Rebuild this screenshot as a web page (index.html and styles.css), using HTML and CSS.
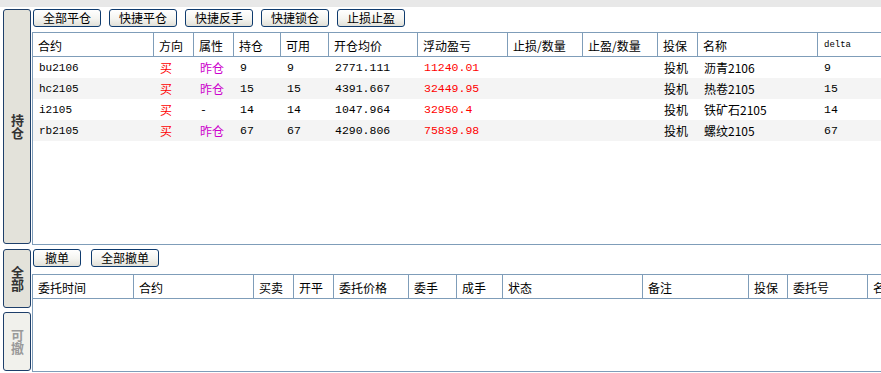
FILE: index.html
```html
<!DOCTYPE html>
<html lang="zh-CN">

<head>
    <meta charset="UTF-8">
    <meta name="viewport" content="width=device-width, initial-scale=1.0">
    <title>持仓</title>
    <link rel="stylesheet" href="styles.css">
</head>

<body>
    <div class="topbar"></div>
    <div class="main">
        <div class="tabs">
            <div class="tab tab-hold">持仓</div>
            <div class="tab tab-all">全部</div>
            <div class="tab tab-cancel">可撤</div>
        </div>

        <div class="content">
            <div class="toolbar toolbar-pos">
                <button>全部平仓</button>
                <button>快捷平仓</button>
                <button>快捷反手</button>
                <button>快捷锁仓</button>
                <button>止损止盈</button>
            </div>
            <div class="grid-box grid-box-pos">
                <table class="grid grid-pos">
                    <thead>
                        <tr>
                            <th style="width:121px">合约</th>
                            <th style="width:40px">方向</th>
                            <th style="width:40px">属性</th>
                            <th style="width:47px">持仓</th>
                            <th style="width:48px">可用</th>
                            <th style="width:89px">开仓均价</th>
                            <th style="width:90px">浮动盈亏</th>
                            <th style="width:75px">止损/数量</th>
                            <th style="width:75px">止盈/数量</th>
                            <th style="width:40px">投保</th>
                            <th style="width:120px">名称</th>
                            <th style="width:120px" class="th-mono">delta</th>
                        </tr>
                    </thead>
                    <tbody>
                        <tr>
                            <td class="code">bu2106</td>
                            <td class="cn buy">买</td>
                            <td class="cn yd">昨仓</td>
                            <td>9</td>
                            <td>9</td>
                            <td>2771.111</td>
                            <td class="profit">11240.01</td>
                            <td></td>
                            <td></td>
                            <td class="cn">投机</td>
                            <td class="cn">沥青2106</td>
                            <td>9</td>
                        </tr>
                        <tr>
                            <td class="code">hc2105</td>
                            <td class="cn buy">买</td>
                            <td class="cn yd">昨仓</td>
                            <td>15</td>
                            <td>15</td>
                            <td>4391.667</td>
                            <td class="profit">32449.95</td>
                            <td></td>
                            <td></td>
                            <td class="cn">投机</td>
                            <td class="cn">热卷2105</td>
                            <td>15</td>
                        </tr>
                        <tr>
                            <td class="code">i2105</td>
                            <td class="cn buy">买</td>
                            <td>-</td>
                            <td>14</td>
                            <td>14</td>
                            <td>1047.964</td>
                            <td class="profit">32950.4</td>
                            <td></td>
                            <td></td>
                            <td class="cn">投机</td>
                            <td class="cn">铁矿石2105</td>
                            <td>14</td>
                        </tr>
                        <tr>
                            <td class="code">rb2105</td>
                            <td class="cn buy">买</td>
                            <td class="cn yd">昨仓</td>
                            <td>67</td>
                            <td>67</td>
                            <td>4290.806</td>
                            <td class="profit">75839.98</td>
                            <td></td>
                            <td></td>
                            <td class="cn">投机</td>
                            <td class="cn">螺纹2105</td>
                            <td>67</td>
                        </tr>
                    </tbody>
                </table>
            </div>

            <div class="toolbar toolbar-order">
                <button class="btn-short">撤单</button>
                <button>全部撤单</button>
            </div>
            <div class="grid-box grid-box-order">
                <table class="grid grid-order">
                    <thead>
                        <tr>
                            <th style="width:101px">委托时间</th>
                            <th style="width:120px">合约</th>
                            <th style="width:40px">买卖</th>
                            <th style="width:40px">开平</th>
                            <th style="width:75px">委托价格</th>
                            <th style="width:48px">委手</th>
                            <th style="width:46px">成手</th>
                            <th style="width:140px">状态</th>
                            <th style="width:106px">备注</th>
                            <th style="width:39px">投保</th>
                            <th style="width:80px">委托号</th>
                            <th style="width:80px">名称</th>
                        </tr>
                    </thead>
                    <tbody></tbody>
                </table>
            </div>
        </div>
    </div>
</body>

</html>
```

FILE: styles.css
```css
* {
    box-sizing: border-box;
}

body {
    margin: 0;
    font-family: "Noto Sans CJK SC", "Liberation Sans", sans-serif;
    font-size: 12px;
    color: #000000;
    background-color: #ffffff;
    height: 373px;
    overflow: hidden;
}

.topbar {
    height: 7px;
    background-color: #e8e8e8;
}

.main {
    display: flex;
    padding-top: 2px;
}

/* left side tabs */

.tabs {
    display: flex;
    flex-direction: column;
    width: 28px;
    margin-left: 3px;
}

.tab {
    display: flex;
    align-items: center;
    justify-content: center;
    border: 1px solid #1e3f6a;
    border-radius: 3px;
    background-color: #e3e2da;
    font-weight: bold;
    font-size: 13px;
    line-height: 14px;
    color: #333333;
    writing-mode: vertical-rl;
    text-orientation: upright;
}

.tab-hold {
    height: 235px;
}

.tab-all {
    height: 59px;
    margin-top: 5px;
}

.tab-cancel {
    height: 59px;
    margin-top: 4px;
    background-color: #f1f1ec;
    color: #9a9a9a;
}

/* right side */

.content {
    flex: 1;
    min-width: 0;
    margin-left: 1px;
    overflow: hidden;
}

.toolbar {
    display: flex;
    gap: 8px;
    height: 18px;
    padding-left: 1px;
}

.toolbar-pos {
    margin-bottom: 5px;
}

.toolbar-order {
    margin-top: 4px;
    margin-bottom: 7px;
    gap: 10px;
}

button {
    height: 18px;
    padding: 0 9px;
    border: 1px solid #0f3b6e;
    border-radius: 3px;
    background: linear-gradient(to bottom, #ffffff 0%, #f4f4f0 55%, #e1e0d8 100%);
    font-family: "Noto Sans CJK SC", sans-serif;
    font-size: 12px;
    line-height: 16px;
    color: #000000;
    cursor: pointer;
}

.btn-short {
    padding: 0 11px;
}

.grid-box {
    border: 1px solid #7f9db9;
    border-right: none;
    overflow: hidden;
}

.grid-box-pos {
    height: 213px;
}

.grid-box-order {
    height: 98px;
}

.grid {
    table-layout: fixed;
    border-collapse: separate;
    border-spacing: 0;
}

.grid-pos {
    width: 905px;
}

.grid-order {
    width: 915px;
}

.grid th {
    height: 24px;
    padding: 1px 0 0 5px;
    border-right: 1px solid #7f9db9;
    border-bottom: 1px solid #7f9db9;
    background-color: #ffffff;
    font-weight: normal;
    text-align: left;
    white-space: nowrap;
    overflow: hidden;
}

.grid th.th-mono {
    padding-left: 6px;
    font-family: "Liberation Mono", monospace;
    font-size: 9px;
}

.grid td {
    height: 21px;
    padding: 0 0 0 6px;
    font-family: "Liberation Mono", "Noto Sans CJK SC", monospace;
    font-size: 11.5px;
    white-space: nowrap;
    overflow: hidden;
}

.grid td.code {
    font-size: 11px;
}

.grid td.cn {
    font-family: "Noto Sans CJK SC", sans-serif;
    font-size: 12px;
}

.grid tbody tr:nth-child(even) td {
    background-color: #f4f4f4;
}

.buy,
.profit {
    color: #ff0000;
}

.yd {
    color: #cc00cc;
}
```
